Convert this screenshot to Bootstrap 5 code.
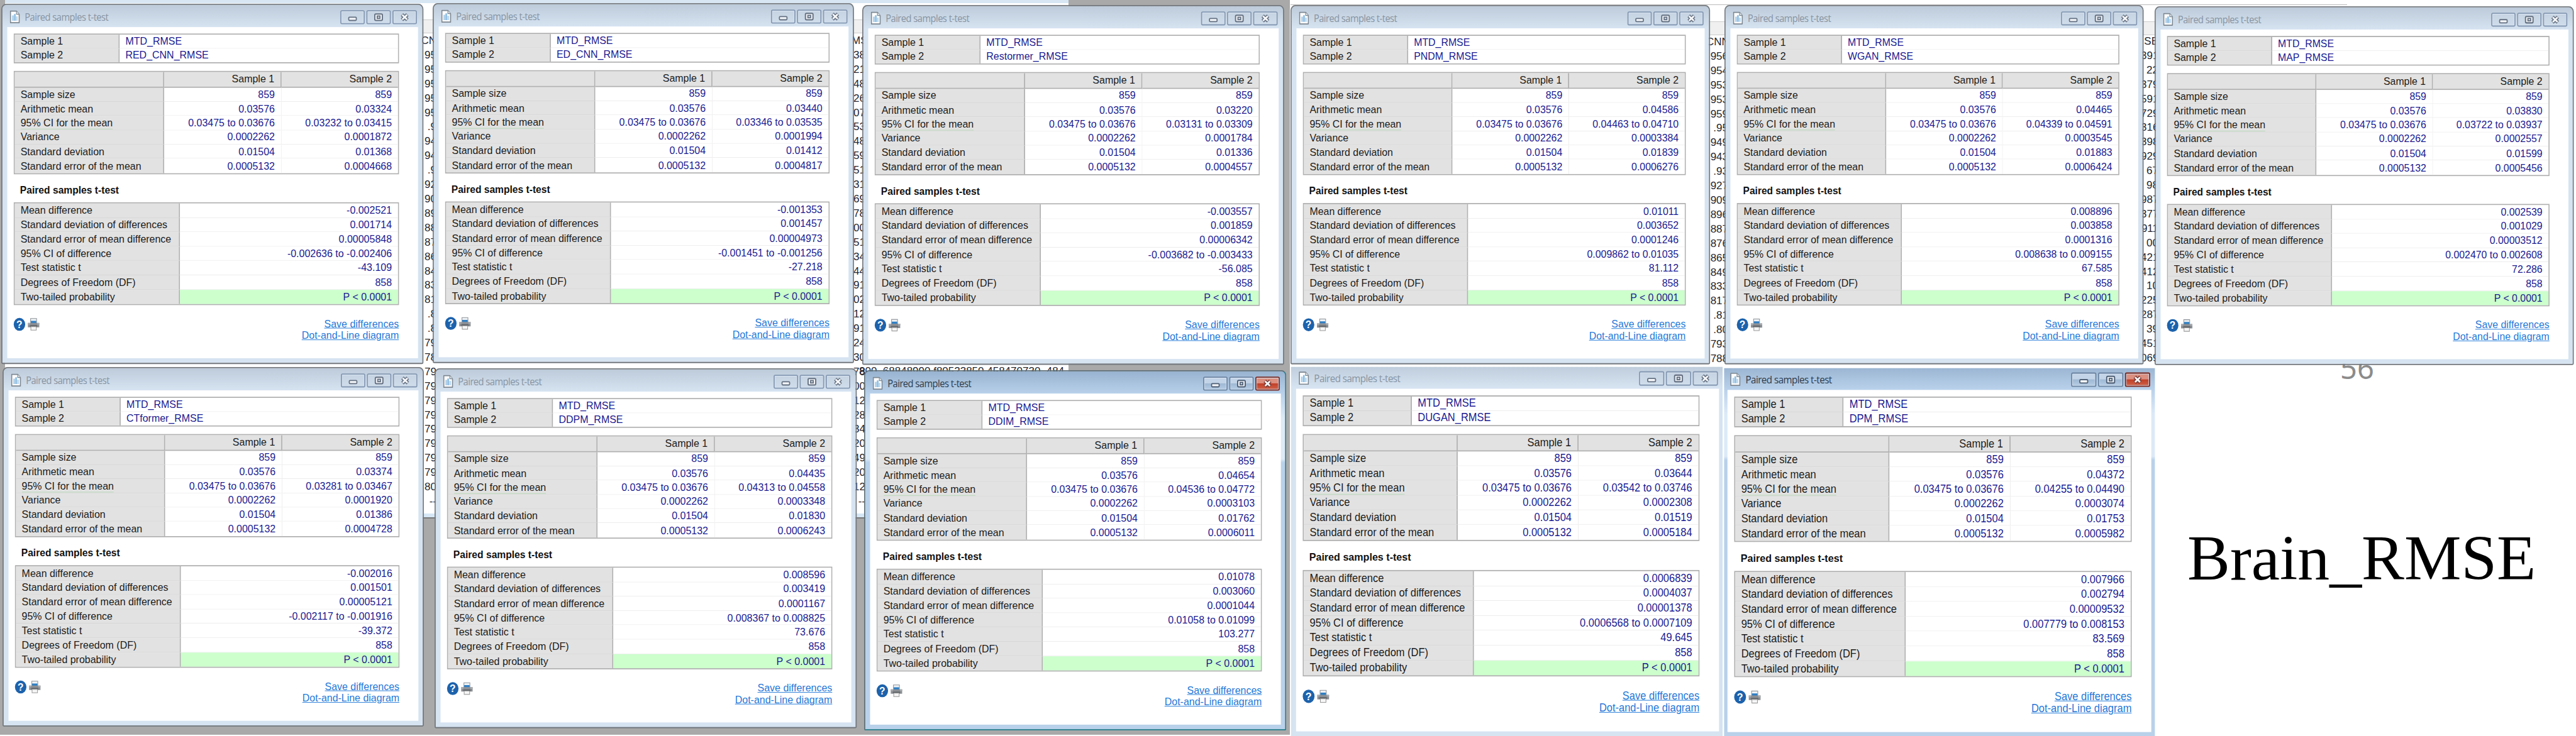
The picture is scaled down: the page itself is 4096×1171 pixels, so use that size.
<!DOCTYPE html>
<html lang="en">
<head>
<meta charset="utf-8">
<title>Brain_RMSE</title>
<meta name="viewport" content="width=device-width, initial-scale=1">
<link href="https://cdn.jsdelivr.net/npm/bootstrap@5.3.0/dist/css/bootstrap.min.css" rel="stylesheet">
<style>
html,body{margin:0;height:100%;overflow:hidden;background:#fff}
body{font-family:"Liberation Sans",Arial,sans-serif}
.desktop{width:4096px;height:1171px}
.backdrop,.sheet,.sheet-col,.win,.caption-num{position:absolute}
.backdrop{left:0;top:0;width:2051px;height:1169px;background:#a9a9a9}
.sheet{background:#fff;overflow:hidden}
.sheet-a{left:8px;top:0;width:1691px;height:823px;border-bottom:6px solid #d6e6f5;box-shadow:0 2px 0 #777}
.sheet-a .cap{height:5px;background:#d8e6f3}
.sheet-b{left:2052px;top:0;width:1680px;height:584px}
.sheet-b .cap{height:8px;border-bottom:1.5px solid #bbb}
.sheet .blank{height:26px}
.sheet .heads{height:22px;background:#f0f0f0;border-top:1px solid #ccc;border-bottom:1px solid #ccc}
.sheet-col{white-space:pre;font-size:17px;line-height:22.9px;color:#26262e;overflow:hidden;text-align:right}
.win{width:777.4px;height:617px;transform-origin:0 0;border:2px solid #74797f;border-radius:9px 9px 3px 3px;padding:0 8px 8px 9px;
 background:linear-gradient(#bdcbda 0,#d6e3f1 38px,#d6e3f1 100%);overflow:hidden}
.win.active{background:linear-gradient(#98b3d0 0,#b8d0ea 38px,#dceaf7 80px,#dceaf7 150px,#b9d1ea 156px,#b9d1ea 100%);border-color:#5f7078 #25808f #25808f #5f7078}
.win.cut{border-color:transparent;border-radius:0;background-clip:border-box;background-origin:border-box}
.cap-bar{height:38px;padding:3px 2px 0 3.5px}
.cap-text{font-family:"Open Sans",sans-serif;font-size:17px;letter-spacing:-.6px;color:#8794a2;margin-left:8.6px;line-height:24px}
.active .cap-text{color:#2d3b4b}
.cap-btn{width:45px;height:24px;border:2px solid #8599b3;border-radius:3px;background:linear-gradient(#c6d3e2,#cfdcea);box-shadow:inset 0 0 0 1px #dbe6f2}
.active .cap-btn{background:linear-gradient(#c3d4e8 45%,#9fb8d4 50%,#b5cce4);border-color:#6d86a3}
.active .cap-btn.x{background:linear-gradient(#dc9080 45%,#c13f28 50%,#cf6248);border-color:#7b2a22}
.cap-btns{gap:3.2px}
.pane{background:#fff;height:567px;padding:11px 0 0 11.5px}
.grid-tbl{width:709.4px;table-layout:fixed;border-collapse:separate;border-spacing:0;border:2px solid #b0b0b0;font-size:18.5px;line-height:20px}
.grid-tbl th,.grid-tbl td{padding:0 11px;border:0 solid #ececec;border-bottom-width:1.5px;font-weight:400;white-space:nowrap;vertical-align:middle}
.grid-tbl th{background:#e2e2e2;color:#1a1a1a;border-color:#d6d6d6;border-right:2px solid #b0b0b0}
.grid-tbl td{color:#1a1a92;text-align:right;background:#fff}
.grid-tbl tr:last-child>*{border-bottom-width:0}
.t-pair th,.t-pair td{height:23.5px}
.t-stat tbody th,.t-stat tbody td{height:24.4px}
.t-diff th,.t-diff td{height:24.67px}
.grid-tbl thead th,.grid-tbl thead tr:last-child>th{border-bottom:2px solid #b0b0b0;text-align:right;height:26.5px}
.grid-tbl thead th:last-child{border-right:0}
.t-pair td{text-align:left}
.t-stat td:nth-child(2){border-right-width:1.5px}
.grid-tbl td.sig{background:#cfc}
.hint{border-bottom:1.5px solid #b5d8b5}
.sub-h{font-size:18.1px;font-weight:700;color:#111;height:48px;line-height:20px;padding:17px 0 0 12px;margin:0}
.foot{width:709.4px;padding-top:22px}
.help{width:21.5px;height:21.5px;border-radius:50%;background:#1c62ac;color:#fff;font-weight:700;font-size:18px;line-height:22px;text-align:center}
.foot-links{font-size:18.5px;line-height:20px;text-align:right}
.foot-links a{color:#1f78d8;text-decoration:underline;display:block}
.caption-num{left:3710px;top:551px;width:76px;text-align:center;font:47px/68px "Noto Sans",sans-serif;color:#8b8b8b}
.caption{position:absolute;left:3478px;top:830px;font:101.8px/116px "Liberation Serif","Times New Roman",serif;color:#000;white-space:nowrap}
</style>
<script src="https://cdn.jsdelivr.net/npm/bootstrap@5.3.0/dist/js/bootstrap.bundle.min.js"></script>
</head>
<body>
<main class="desktop position-relative overflow-hidden" id="desk">
  <div class="backdrop"></div>
  <div class="sheet sheet-a"><div class="cap"></div><div class="blank"></div><div class="heads"></div></div>
  <div class="sheet sheet-b"><div class="cap"></div><div class="blank"></div><div class="heads"></div></div>
  <div class="caption-num">56</div>
  <div class="caption">Brain_RMSE</div>
</main>
<script>
const K = 0.929;
const desk = document.getElementById('desk');

// Spreadsheet columns showing between the windows: left, top, width, values
const strips = [
  [668, 54, 26, 'CN 95 95 95 95 95 .9 94 94 .9 92 90 89 88 87 86 84 83 81 .8 .8 79 78 79 79 79 79 79 79 79 79 80 --'],
  [1354, 54, 22, 'MS 38 21 48 26 07 53 48 59 51 31 69 78 00 51 34 44 91 02 12 91 24 30 78 00 12 28 34 20 49 20 12 --'],
  [2713, 56, 35, 'CNN 956 954 953 953 959 .95 949 943 .93 927 909 896 887 876 865 849 833 817 .81 .80 793 788'],
  [3404, 55, 28, 'SE 391 22 379 591 729 316 398 929 67 98 987 377 911 00 421 412 10 225 287 39 451 069']
];
for (const [l, t, w, v] of strips)
  desk.insertAdjacentHTML('beforeend', `<div class="sheet-col" style="left:${l}px;top:${t}px;width:${w}px">${v.split(' ').join('\n')}</div>`);
desk.insertAdjacentHTML('beforeend', `<div class="sheet-col" style="left:1366px;top:580px;width:325px">800  68848990 f80523850 458470730  4845</div>`);

// name, grid left, right, top, bottom, state, sample 2 stats, difference stats
const wins = [
 ['RED_CNN',22.7,682.4,57,522.7,'','0.03324|0.03232 to 0.03415|0.0001872|0.01368|0.0004668','-0.002521|0.001714|0.00005848|-0.002636 to -0.002406|-43.109'],
 ['ED_CNN',761,1419.3,56.2,521.5,'','0.03440|0.03346 to 0.03535|0.0001994|0.01412|0.0004817','-0.001353|0.001457|0.00004973|-0.001451 to -0.001256|-27.218'],
 ['Restormer',1496.9,2156.2,59.9,525,'','0.03220|0.03131 to 0.03309|0.0001784|0.01336|0.0004557','-0.003557|0.001859|0.00006342|-0.003682 to -0.003433|-56.085'],
 ['PNDM',2229,2884.6,59,523.5,'','0.04586|0.04463 to 0.04710|0.0003384|0.01839|0.0006276','0.01011|0.003652|0.0001246|0.009862 to 0.01035|81.112'],
 ['WGAN',2972.6,3627.6,59,523.5,'','0.04465|0.04339 to 0.04591|0.0003545|0.01883|0.0006424','0.008896|0.003858|0.0001316|0.008638 to 0.009155|67.585'],
 ['MAP',3708.2,4363.2,61.1,524.8,'','0.03830|0.03722 to 0.03937|0.0002557|0.01599|0.0005456','0.002539|0.001029|0.00003512|0.002470 to 0.002608|72.286'],
 ['CTformer',24.5,682.9,679.7,1144.5,'','0.03374|0.03281 to 0.03467|0.0001920|0.01386|0.0004728','-0.002016|0.001501|0.00005121|-0.002117 to -0.001916|-39.372'],
 ['DDPM',764.3,1424,682.1,1147.4,'','0.04435|0.04313 to 0.04558|0.0003348|0.01830|0.0006243','0.008596|0.003419|0.0001167|0.008367 to 0.008825|73.676'],
 ['DDIM',1499.3,2159,684.6,1150.3,'active','0.04654|0.04536 to 0.04772|0.0003103|0.01762|0.0006011','0.01078|0.003060|0.0001044|0.01058 to 0.01099|103.277'],
 ['DUGAN',2228.6,2908,677.2,1159.2,'cut','0.03644|0.03542 to 0.03746|0.0002308|0.01519|0.0005184','0.0006839|0.0004037|0.00001378|0.0006568 to 0.0007109|49.645'],
 ['DPM',2968,3648.7,679.7,1160.9,'active cut','0.04372|0.04255 to 0.04490|0.0003074|0.01753|0.0005982','0.007966|0.002794|0.00009532|0.007779 to 0.008153|83.569']
];
const s1 = ['859','0.03576','0.03475 to 0.03676','0.0002262','0.01504','0.0005132'];
const statRows = ['Sample size','Arithmetic mean','<span class="hint">95% CI for the mean</span>','Variance','Standard deviation','Standard error of the mean'];
const diffRows = ['Mean difference','Standard deviation of differences','Standard error of mean difference','95% CI of difference','Test statistic t','Degrees of Freedom (DF)','Two-tailed probability'];

const docIcon = `<svg width="20" height="23" viewBox="0 0 20 23"><path d="M2 1.5h11l5 5.500v14.500H2z" fill="#fdfdfd" stroke="#7d8791" stroke-width="1.8" stroke-linejoin="round"/><path d="M13 1.500v5.500h5" fill="#dfe5ea" stroke="#7d8791" stroke-width="1.300"/><path d="M5 9h3v9H5z" fill="#a8cdea"/><path d="M8.500 6.500h3v11.500h-3z" fill="#8dbde2"/><path d="M12 10.500h3V18h-3z" fill="#b9d7ee"/></svg>`;
const glyph = (k, on) => {
  const c = on ? '#4f6076' : '#657182';
  const g = {
    min: `<rect x="15" y="10" width="14" height="5.500" rx="1.500" fill="#f4f6f9" stroke="${c}" stroke-width="2"/>`,
    max: `<rect x="15" y="4.500" width="14" height="11" rx="2" fill="#f4f6f9" stroke="${c}" stroke-width="2.200"/><rect x="19.500" y="8" width="5" height="4" fill="#dfe6ee" stroke="${c}" stroke-width="2"/>`,
    x: `<path d="M17 5.500l10 9M27 5.500l-10 9" stroke="${on ? '#7d3a34' : c}" stroke-width="6.500"/><path d="M17.500 6l9 8M26.500 6l-9 8" stroke="#f6f7f9" stroke-width="3"/>`
  };
  return `<div class="cap-btn ${k} d-flex"><svg width="41" height="20" viewBox="1.500 0 41 20">${g[k]}</svg></div>`;
};
const printer = `<svg width="23" height="22" viewBox="0 0 23 22"><path d="M6 1h11v7H6z" fill="#eef2f5" stroke="#8d9298" stroke-width="1.200"/><path d="M6.500 5h10v4h-10z" fill="#2f7fc4"/><path d="M1 8.500h21V16H1z" fill="#8b8f94"/><path d="M1 8.500h4v3H1zM18 8.500h4v3h-4z" fill="#a9adb1"/><path d="M5 12.500h13v3H5z" fill="#5d6165"/><path d="M6.500 15h10v6h-10z" fill="#f6f6f6" stroke="#999" stroke-width="1.200"/></svg>`;

for (const [name, L, R, T, B, state, a, d] of wins) {
  const on = state.includes('active'), s2 = ['859', ...a.split('|')], df = [...d.split('|'), '858', 'P &lt; 0.0001'];
  const sx = (R - L) / 709.4 * K, sy = (B - T) / 465.7 * K;
  const x = L * K - 22.26 * sx, y = T * K - 51 * sy;
  const clip = state.includes('cut') ? `;clip-path:inset(4px 4px 0 ${on ? 5 : 2}px)` : '';
  desk.insertAdjacentHTML('beforeend', `
  <section class="win ${state}" style="left:${x}px;top:${y}px;transform:scale(${sx},${sy})${clip}">
    <header class="cap-bar d-flex align-items-center">${docIcon}<span class="cap-text me-auto">Paired samples t-test</span>
      <div class="cap-btns d-flex">${glyph('min', on)}${glyph('max', on)}${glyph('x', on)}</div></header>
    <div class="pane">
      <table class="grid-tbl t-pair"><colgroup><col style="width:193px"><col></colgroup>
        <tr><th>Sample 1</th><td>MTD_RMSE</td></tr><tr><th>Sample 2</th><td>${name}_RMSE</td></tr></table>
      <table class="grid-tbl t-stat" style="margin-top:13px"><colgroup><col style="width:275px"><col style="width:216px"><col></colgroup>
        <thead><tr><th></th><th>Sample 1</th><th>Sample 2</th></tr></thead>
        <tbody>${statRows.map((r, i) => `<tr><th>${r}</th><td>${s1[i]}</td><td>${s2[i]}</td></tr>`).join('')}</tbody></table>
      <h6 class="sub-h">Paired samples t-test</h6>
      <table class="grid-tbl t-diff"><colgroup><col style="width:304px"><col></colgroup>
        <tbody>${diffRows.map((r, i) => `<tr><th>${r}</th><td class="${i === 6 ? 'sig' : ''}">${df[i]}</td></tr>`).join('')}</tbody></table>
      <div class="foot d-flex justify-content-between">
        <div class="d-flex gap-1"><span class="help">?</span>${printer}</div>
        <div class="foot-links"><a href="#">Save differences</a><a href="#">Dot-and-Line diagram</a></div></div>
    </div>
  </section>`);
}
</script>
</body>
</html>
